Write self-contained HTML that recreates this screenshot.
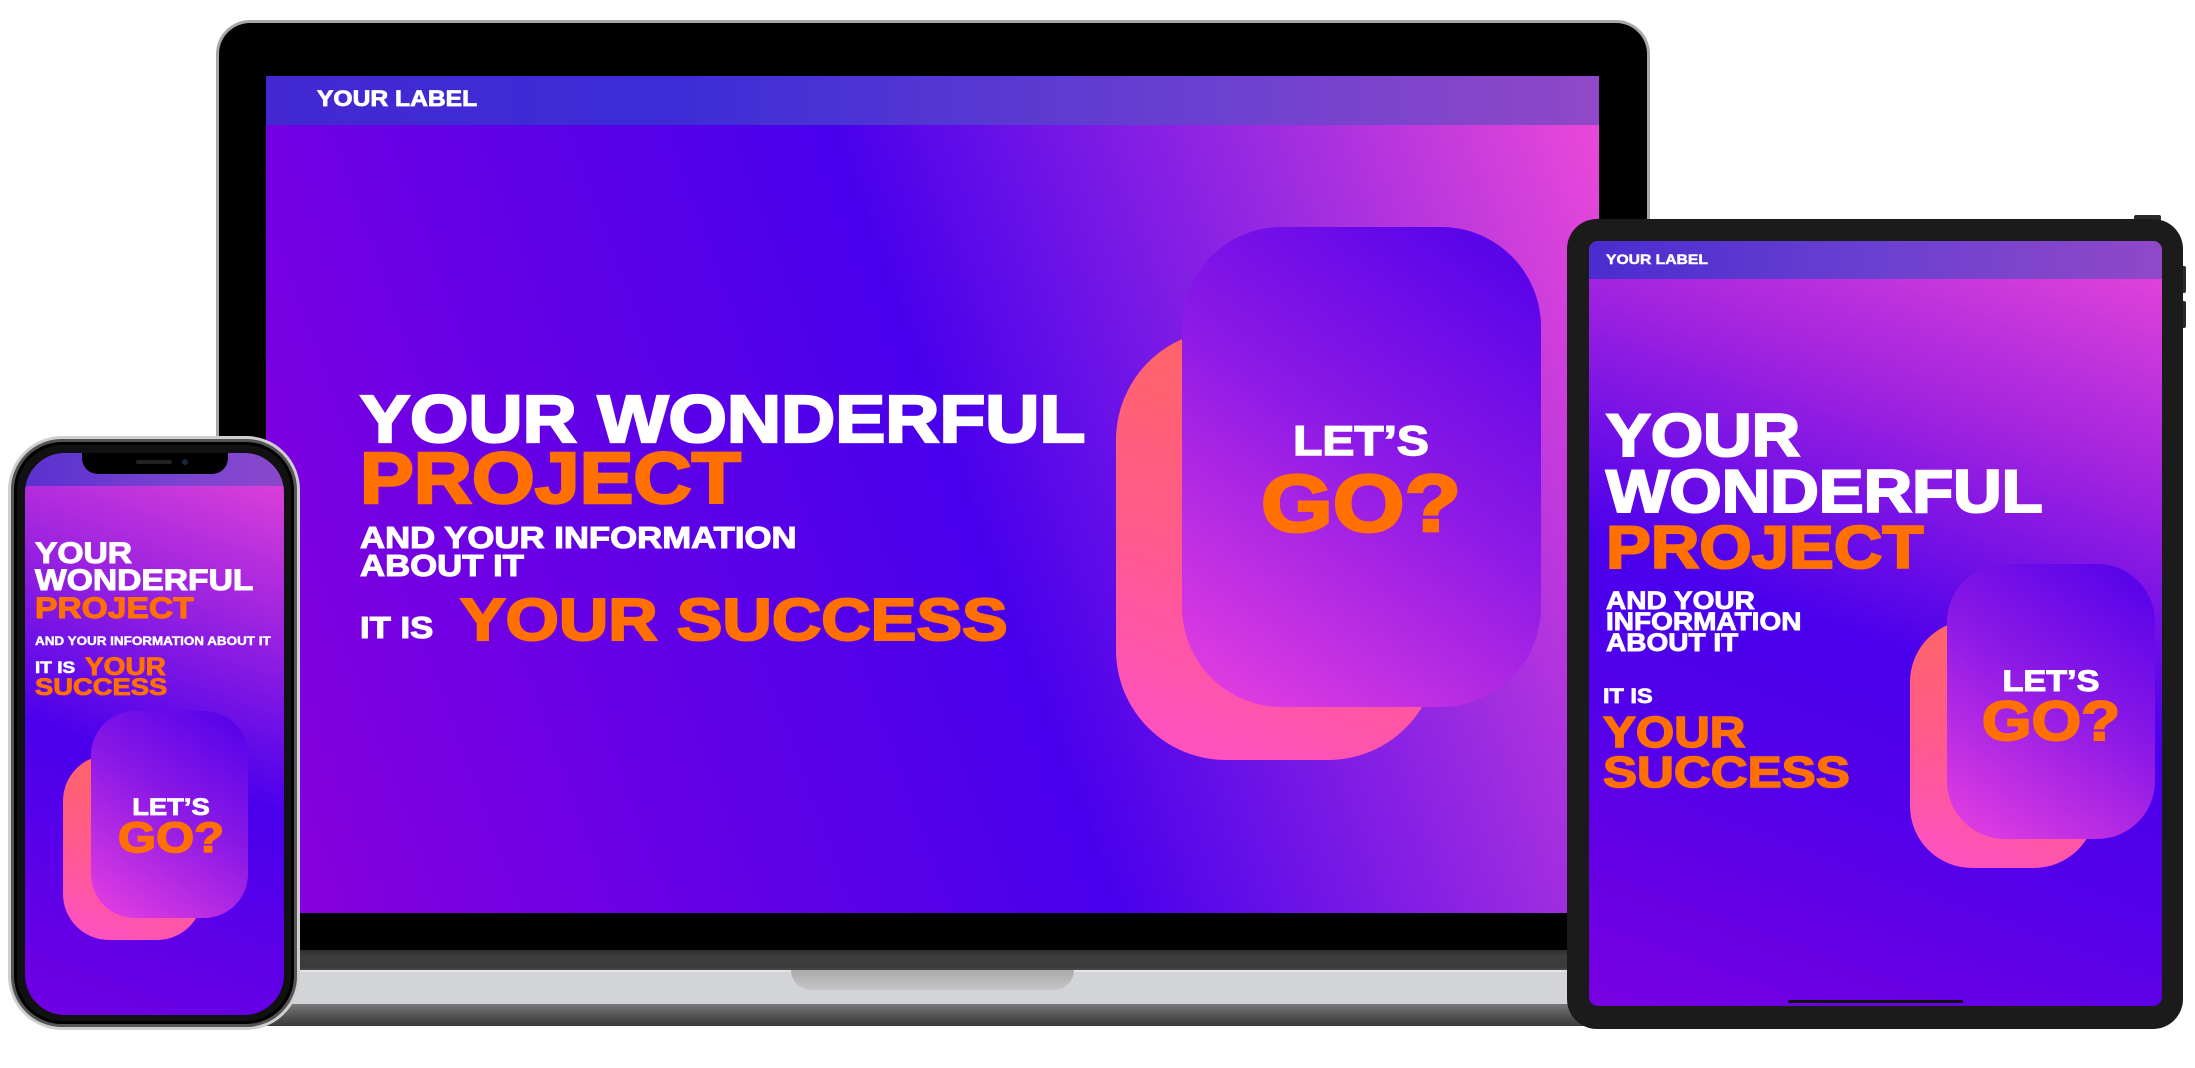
<!DOCTYPE html>
<html><head><meta charset="utf-8">
<style>
*{margin:0;padding:0;box-sizing:border-box}
html,body{width:2195px;height:1068px;background:#fff;overflow:hidden;position:relative}
.a{position:absolute}
.t{position:absolute;font-family:"Liberation Sans",Arial,sans-serif;font-weight:bold;line-height:1;white-space:nowrap;transform-origin:left top;transform:scaleX(1.12);color:#fff;-webkit-text-stroke:0.035em currentColor}
.o{color:#ff7000}
.c{position:absolute;font-family:"Liberation Sans",Arial,sans-serif;font-weight:bold;line-height:1;white-space:nowrap;text-align:center;transform:scaleX(1.14);transform-origin:center top;-webkit-text-stroke:0.035em currentColor}
.back{background:linear-gradient(200deg,#ff6a55 0%,#ff5a8a 55%,#fc50c8 100%)}
.front{background:linear-gradient(215deg,#5000ea 0%,#8a18e6 45%,#e840e0 100%)}
</style></head><body>

<!-- LAPTOP -->
<div class="a" style="left:205px;top:948px;width:1460px;height:24px;background:linear-gradient(#2a2a2a,#3e3e3e 40%,#3a3a3a 80%,#555)"></div>
<div class="a" style="left:205px;top:970px;width:1460px;height:36px;background:#d3d4d8;border-top:2px solid #e2e3e6"></div>
<div class="a" style="left:205px;top:1004px;width:1460px;height:22px;background:linear-gradient(#7a7a7a,#555 50%,#3a3a3a);border-radius:0 0 30px 30px"></div>
<div class="a" style="left:791px;top:970px;width:283px;height:20px;background:linear-gradient(#aaa,#c4c5c8);border-radius:0 0 24px 24px"></div>

<div class="a" style="left:216px;top:20px;width:1434px;height:930px;background:#000;border:3px solid #a8a8a8;border-bottom:none;border-radius:34px 34px 0 0"></div>
<div class="a" style="left:266px;top:76px;width:1333px;height:837px;background:linear-gradient(70deg,#8a00dc 0%,#6400e6 28%,#4800ec 52%,#a22ee0 80%,#ee4ad8 100%);overflow:hidden">
  <div class="a" style="left:0;top:0;width:1333px;height:49px;background:linear-gradient(90deg,#4328d0,#3c2cd6 30%,#6a40d0 70%,#9048c8);"></div>
  <div class="t" style="left:51px;top:12px;font-size:22px">YOUR LABEL</div>
  <div class="t" style="left:94px;top:310px;font-size:67px">YOUR WONDERFUL</div>
  <div class="t o" style="left:94px;top:367px;font-size:72px">PROJECT</div>
  <div class="t" style="left:94px;top:446px;font-size:31px">AND YOUR INFORMATION</div>
  <div class="t" style="left:94px;top:474px;font-size:31px">ABOUT IT</div>
  <div class="t" style="left:94px;top:536px;font-size:31px">IT IS</div>
  <div class="t o" style="left:194px;top:515px;font-size:59px;transform:scaleX(1.16)">YOUR SUCCESS</div>
  <div class="a back" style="left:850px;top:254px;width:322px;height:430px;border-radius:110px"></div>
  <div class="a front" style="left:916px;top:151px;width:359px;height:480px;border-radius:100px"></div>
  <div class="c" style="left:945px;top:344px;width:300px;font-size:42px;color:#fff">LET’S</div>
  <div class="c o" style="left:945px;top:388px;width:300px;font-size:81px">GO?</div>
</div>

<!-- TABLET -->
<div class="a" style="left:2134px;top:215px;width:27px;height:6px;background:#2a2a2a;border-radius:2px"></div>
<div class="a" style="left:2180px;top:266px;width:6px;height:27px;background:#2a2a2a;border-radius:2px"></div>
<div class="a" style="left:2180px;top:301px;width:6px;height:27px;background:#2a2a2a;border-radius:2px"></div>
<div class="a" style="left:1567px;top:219px;width:616px;height:810px;background:#1b1b1b;border-radius:30px"></div>
<div class="a" style="left:1589px;top:241px;width:573px;height:765px;border-radius:9px;overflow:hidden;background:linear-gradient(20deg,#7800e0 0%,#5400ea 30%,#4a00ec 48%,#9a20e0 72%,#ea48d8 100%)">
  <div class="a" style="left:0;top:0;width:573px;height:38px;background:linear-gradient(90deg,#4a2cd0,#6a40d0 50%,#9048c8)"></div>
  <div class="t" style="left:17px;top:11px;font-size:14px">YOUR LABEL</div>
  <div class="t" style="left:17px;top:165px;font-size:60px">YOUR</div>
  <div class="t" style="left:17px;top:221px;font-size:60px">WONDERFUL</div>
  <div class="t o" style="left:17px;top:277px;font-size:60px">PROJECT</div>
  <div class="t" style="left:17px;top:348px;font-size:25px">AND YOUR</div>
  <div class="t" style="left:17px;top:369px;font-size:25px">INFORMATION</div>
  <div class="t" style="left:17px;top:390px;font-size:25px">ABOUT IT</div>
  <div class="t" style="left:14px;top:445px;font-size:21px">IT IS</div>
  <div class="t o" style="left:14px;top:470px;font-size:44px">YOUR</div>
  <div class="t o" style="left:14px;top:510px;font-size:44px;transform:scaleX(1.16)">SUCCESS</div>
  <div class="a back" style="left:321px;top:379px;width:186px;height:248px;border-radius:62px"></div>
  <div class="a front" style="left:358px;top:323px;width:208px;height:275px;border-radius:58px"></div>
  <div class="c" style="left:362px;top:426px;width:200px;font-size:30px;color:#fff">LET’S</div>
  <div class="c o" style="left:362px;top:452px;width:200px;font-size:56px">GO?</div>
  <div class="a" style="left:199px;top:759px;width:175px;height:3px;background:#111;border-radius:2px"></div>
</div>

<!-- PHONE -->
<div class="a" style="left:8px;top:436px;width:292px;height:594px;background:#111;border:3px solid #cfcfcf;border-radius:54px;box-shadow:inset 0 0 0 3px #555,inset 0 0 0 6px #000"></div>
<div class="a" style="left:25px;top:453px;width:259px;height:562px;border-radius:40px;overflow:hidden;background:linear-gradient(20deg,#7000e2 0%,#5600ea 30%,#4a00ec 45%,#9a22e0 72%,#e846d8 100%)">
  <div class="a" style="left:0;top:0;width:259px;height:33px;background:linear-gradient(90deg,#5a30d0,#7a44d0 60%,#8a48cc)"></div>
  <div class="a" style="left:57px;top:0;width:146px;height:21px;background:#000;border-radius:0 0 16px 16px"></div>
  <div class="a" style="left:111px;top:7px;width:36px;height:4px;background:#222;border-radius:2px"></div>
  <div class="a" style="left:157px;top:6px;width:6px;height:6px;background:#1a2540;border-radius:50%"></div>
  <div class="t" style="left:10px;top:86px;font-size:30px">YOUR</div>
  <div class="t" style="left:10px;top:113px;font-size:30px">WONDERFUL</div>
  <div class="t o" style="left:10px;top:141px;font-size:30px">PROJECT</div>
  <div class="t" style="left:10px;top:182px;font-size:12px">AND YOUR INFORMATION ABOUT IT</div>
  <div class="t" style="left:10px;top:206px;font-size:17px">IT IS</div>
  <div class="t o" style="left:60px;top:202px;font-size:25px">YOUR</div>
  <div class="t o" style="left:10px;top:223px;font-size:24px;transform:scaleX(1.14)">SUCCESS</div>
  <div class="a back" style="left:38px;top:302px;width:140px;height:185px;border-radius:46px"></div>
  <div class="a front" style="left:66px;top:258px;width:157px;height:207px;border-radius:44px"></div>
  <div class="c" style="left:86px;top:343px;width:120px;font-size:24px;color:#fff">LET’S</div>
  <div class="c o" style="left:86px;top:364px;width:120px;font-size:43px">GO?</div>
</div>

</body></html>
